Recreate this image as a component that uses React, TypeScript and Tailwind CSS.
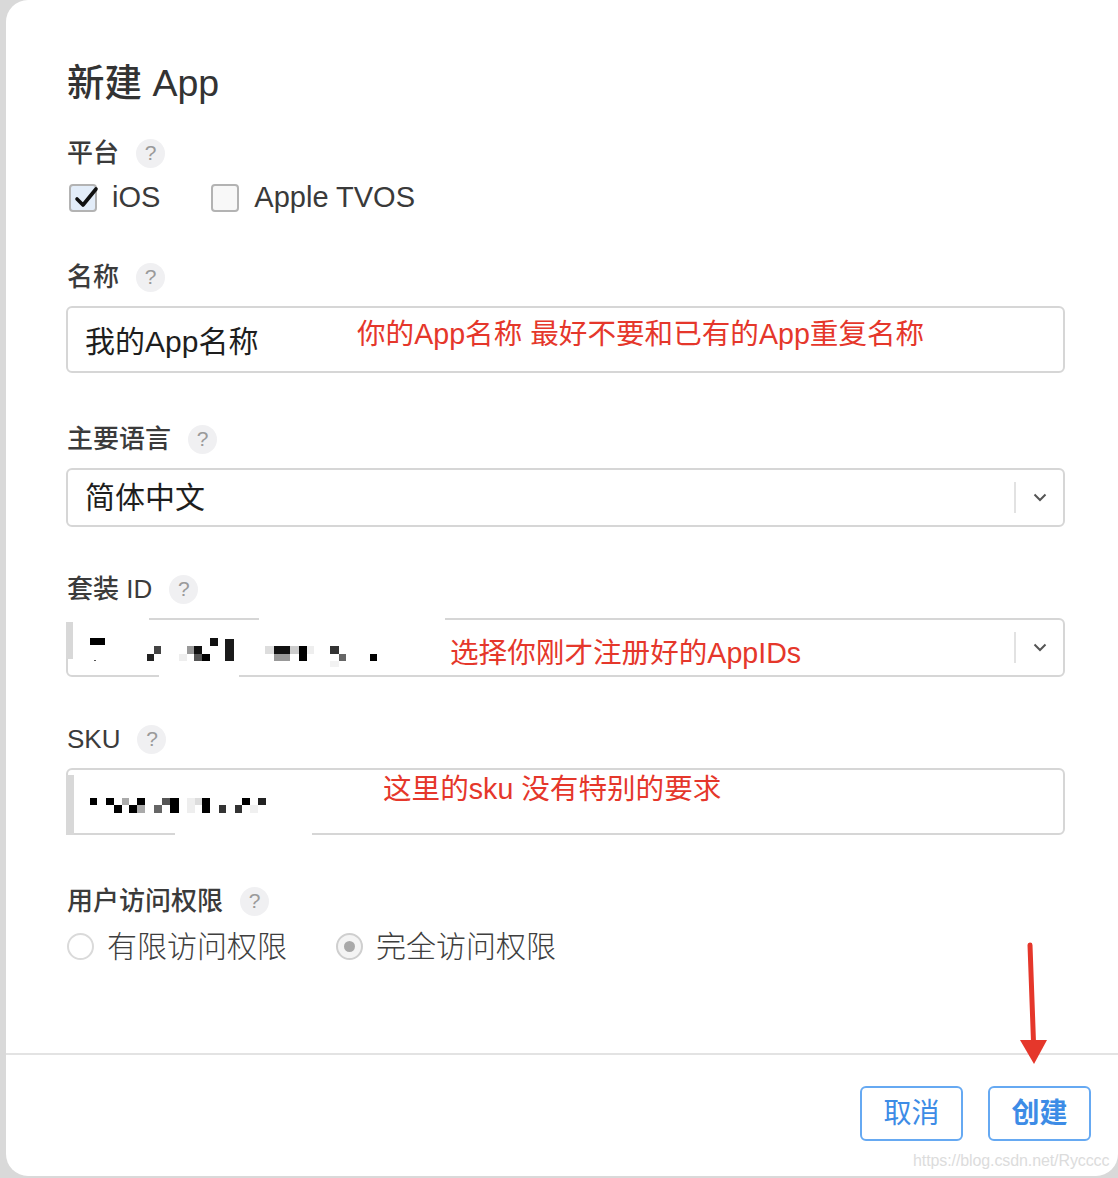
import React from "react";

// 问号提示圆点
const Help = () => (
  <span className="ml-[17px] flex h-[29px] w-[29px] items-center justify-center rounded-full bg-[#f0f0f2] text-[21px] font-light text-[#9a9a9a]">
    ?
  </span>
);

const Label = ({ text, className = "" }: { text: string; className?: string }) => (
  <div className={`flex h-[30px] items-center pl-[1px] text-[26px] font-medium text-[#3b3b3b] ${className}`}>
    <span>{text}</span>
    <Help />
  </div>
);

const Checkbox = ({ checked, label }: { checked?: boolean; label: string }) => (
  <div className="flex items-center">
    <span
      className={`relative flex h-[28px] w-[28px] items-center justify-center rounded-[4px] border-2 border-[#b3b3b3] ${
        checked ? "bg-[#e3edf9]" : "bg-[#f8f8f8]"
      }`}
    >
      {checked && (
        <svg className="absolute -left-[2px] -top-[2px]" width="30" height="30" viewBox="0 0 30 30">
          <path d="M8 15 L14 21 L27 5" fill="none" stroke="#111" strokeWidth="3.6" strokeLinecap="round" strokeLinejoin="round" />
        </svg>
      )}
    </span>
    <span className="ml-[15px] text-[29px] font-light text-[#3a3a3a]">{label}</span>
  </div>
);

const Radio = ({ checked, label }: { checked?: boolean; label: string }) => (
  <div className="flex items-center">
    <span
      className={`flex h-[27px] w-[27px] items-center justify-center rounded-full border-2 ${
        checked ? "border-[#cfcfcf] bg-[#f4f4f4]" : "border-[#dadada] bg-white"
      }`}
    >
      {checked && <span className="h-[11px] w-[11px] rounded-full bg-[#a9a9a9]" />}
    </span>
    <span className="ml-[13px] text-[30px] font-light text-[#3e3e3e]">{label}</span>
  </div>
);

const Note = ({ text, className }: { text: string; className: string }) => (
  <span className={`absolute whitespace-nowrap text-[28.6px] leading-[34px] text-[#e5372b] ${className}`}>{text}</span>
);

const Chevron = () => (
  <div className="flex h-full items-center">
    <span className="h-[31px] w-[2px] bg-[#e2e2e2]" />
    <svg className="ml-[17px] mr-[16px]" width="14" height="9" viewBox="0 0 14 9">
      <path d="M1.5 1.5 L7 7 L12.5 1.5" fill="none" stroke="#555" strokeWidth="2" />
    </svg>
  </div>
);

type Px = [number, number, number, number, string];

// 打码的像素块
const bundleBlocks: Px[] = [
  [22, 18, 15, 7, "#000"],
  [26, 40, 2, 1, "#555"],
  [79, 34, 7, 7, "#222"],
  [86, 26, 7, 8, "#444"],
  [111, 34, 8, 7, "#eee"],
  [119, 26, 7, 8, "#999"],
  [126, 26, 8, 8, "#111"],
  [126, 34, 8, 7, "#555"],
  [134, 34, 8, 7, "#000"],
  [142, 18, 8, 8, "#111"],
  [157, 19, 9, 22, "#1a1a1a"],
  [197, 26, 10, 8, "#ddd"],
  [206, 26, 16, 8, "#111"],
  [206, 34, 16, 7, "#999"],
  [222, 26, 9, 8, "#ccc"],
  [231, 26, 8, 15, "#000"],
  [239, 26, 7, 8, "#eee"],
  [262, 26, 9, 8, "#333"],
  [271, 34, 7, 7, "#666"],
  [262, 41, 9, 6, "#f2f2f2"],
  [302, 34, 7, 7, "#000"],
];

const skuBlocks: Px[] = [
  [22, 28, 7, 7, "#000"],
  [38, 28, 8, 7, "#000"],
  [46, 35, 8, 8, "#000"],
  [54, 28, 7, 7, "#aaa"],
  [61, 35, 8, 8, "#000"],
  [69, 28, 8, 7, "#000"],
  [69, 35, 8, 8, "#aaa"],
  [86, 35, 8, 8, "#666"],
  [94, 28, 8, 7, "#555"],
  [102, 28, 9, 15, "#000"],
  [119, 28, 8, 15, "#eee"],
  [127, 28, 7, 7, "#ddd"],
  [134, 28, 8, 15, "#000"],
  [151, 35, 7, 8, "#333"],
  [167, 35, 7, 8, "#333"],
  [174, 28, 8, 7, "#000"],
  [182, 35, 8, 8, "#f0f0f0"],
  [190, 28, 8, 7, "#222"],
];

const Mosaic = ({ blocks, patches }: { blocks: Px[]; patches: Px[] }) => (
  <svg className="absolute -left-[2px] -top-[2px] overflow-visible" width="400" height="72" viewBox="-2 -2 400 72">
    {patches.map(([x, y, w, h, c], i) => (
      <rect key={"p" + i} x={x} y={y} width={w} height={h} fill={c} />
    ))}
    {blocks.map(([x, y, w, h, c], i) => (
      <rect key={i} x={x} y={y} width={w} height={h} fill={c} />
    ))}
  </svg>
);

export default function App() {
  return (
    <div className="relative h-[1178px] w-[1118px] overflow-hidden bg-[#d9d9d9] pb-[2px] pl-[6px] font-['Liberation_Sans','Noto_Sans_CJK_SC',sans-serif]">
      <div className="flex h-[1176px] flex-col rounded-l-[22px] rounded-br-[22px] bg-white">
        <div className="pl-[60px] pr-[53px]">
          <h1 className="mt-[63px] h-[41px] pl-[1px] text-[37.5px] font-medium leading-[41px] text-[#333]">新建 App</h1>

          <Label text="平台" className="mt-[34px]" />
          <div className="mt-[15px] flex h-[30px] items-center gap-[51px] pl-[3px]">
            <Checkbox checked label="iOS" />
            <Checkbox label="Apple TVOS" />
          </div>

          <Label text="名称" className="mt-[49px]" />
          <div className="relative mt-[14px] flex h-[67px] items-center rounded-[6px] border-2 border-[#d6d6d6] pl-[17px] text-[30px] text-[#1e1e1e]">
            <span className="mt-[3px]">我的App名称</span>
            <Note text="你的App名称 最好不要和已有的App重复名称" className="left-[289px] top-[9px]" />
          </div>

          <Label text="主要语言" className="mt-[51px]" />
          <div className="mt-[14px] flex h-[59px] items-center justify-between rounded-[6px] border-2 border-[#d6d6d6] pl-[17px] text-[30px] text-[#1e1e1e]">
            <span>简体中文</span>
            <Chevron />
          </div>

          <Label text="套装 ID" className="mt-[47px]" />
          <div className="relative mt-[14px] flex h-[59px] items-center justify-end rounded-[6px] border-2 border-[#d6d6d6]">
            <Mosaic
              blocks={bundleBlocks}
              patches={[
                [-2, -2, 83, 6, "#fff"],
                [191, -2, 186, 6, "#fff"],
                [91, 55, 80, 6, "#fff"],
                [-2, 2, 7, 37, "#d8d8d8"],
              ]}
            />
            <Note text="选择你刚才注册好的AppIDs" className="left-[382px] top-[16px]" />
            <Chevron />
          </div>

          <Label text="SKU" className="mt-[47px]" />
          <div className="relative mt-[14px] h-[67px] rounded-[6px] border-2 border-[#d6d6d6]">
            <Mosaic
              blocks={skuBlocks}
              patches={[
                [-2, 5, 8, 60, "#d8d8d8"],
                [107, 63, 137, 6, "#fff"],
              ]}
            />
            <Note text="这里的sku 没有特别的要求" className="left-[315px] top-[2px]" />
          </div>

          <Label text="用户访问权限" className="mt-[51px]" />
          <div className="mt-[15px] flex h-[30px] items-center gap-[49px] pl-[1px]">
            <Radio label="有限访问权限" />
            <Radio checked label="完全访问权限" />
          </div>
        </div>

        <div className="mt-[92px] h-[2px] bg-[#e3e3e3]" />

        <div className="mt-[31px] flex justify-end gap-[25px] pr-[27px]">
          <button className="flex h-[55px] w-[103px] items-center justify-center rounded-[6px] border-2 border-[#66a9f2] text-[28px] text-[#3d8ce6]">
            取消
          </button>
          <button className="flex h-[55px] w-[103px] items-center justify-center rounded-[6px] border-2 border-[#66a9f2] text-[28px] font-bold text-[#3d8ce6]">
            创建
          </button>
        </div>
      </div>

      {/* 红色箭头标注 */}
      <svg className="absolute left-0 top-0" width="1118" height="1178" viewBox="0 0 1118 1178">
        <path d="M1030 945 L1033.5 1042" stroke="#e5372b" strokeWidth="5" strokeLinecap="round" />
        <path d="M1020 1040 L1047 1040 L1034 1064 Z" fill="#e5372b" />
      </svg>

      <span className="absolute left-[913px] top-[1149px] text-[16px] tracking-[-0.1px] text-[#dcdcdc]">https://blog.csdn.net/Rycccc</span>
    </div>
  );
}
